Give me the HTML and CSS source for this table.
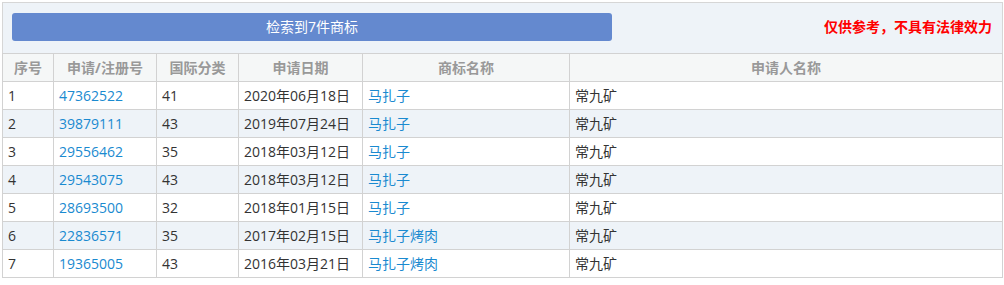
FILE: index.html
```html
<!DOCTYPE html>
<html lang="zh-CN">
<head>
<meta charset="utf-8">
<link rel="stylesheet" href="styles.css">
</head>
<body>
<div class="wrap">
  <div class="panel">
    <div class="btn">检索到7件商标</div>
    <div class="note">仅供参考，不具有法律效力</div>
  </div>
  <table class="grid">
    <colgroup>
      <col class="c1"><col class="c2"><col class="c3"><col class="c4"><col class="c5"><col class="c6">
    </colgroup>
    <thead>
      <tr><th>序号</th><th>申请/注册号</th><th>国际分类</th><th>申请日期</th><th>商标名称</th><th>申请人名称</th></tr>
    </thead>
    <tbody>
      <tr><td>1</td><td><a class="lnk">47362522</a></td><td>41</td><td>2020年06月18日</td><td><a class="lnk">马扎子</a></td><td>常九矿</td></tr>
      <tr><td>2</td><td><a class="lnk">39879111</a></td><td>43</td><td>2019年07月24日</td><td><a class="lnk">马扎子</a></td><td>常九矿</td></tr>
      <tr><td>3</td><td><a class="lnk">29556462</a></td><td>35</td><td>2018年03月12日</td><td><a class="lnk">马扎子</a></td><td>常九矿</td></tr>
      <tr><td>4</td><td><a class="lnk">29543075</a></td><td>43</td><td>2018年03月12日</td><td><a class="lnk">马扎子</a></td><td>常九矿</td></tr>
      <tr><td>5</td><td><a class="lnk">28693500</a></td><td>32</td><td>2018年01月15日</td><td><a class="lnk">马扎子</a></td><td>常九矿</td></tr>
      <tr><td>6</td><td><a class="lnk">22836571</a></td><td>35</td><td>2017年02月15日</td><td><a class="lnk">马扎子烤肉</a></td><td>常九矿</td></tr>
      <tr><td>7</td><td><a class="lnk">19365005</a></td><td>43</td><td>2016年03月21日</td><td><a class="lnk">马扎子烤肉</a></td><td>常九矿</td></tr>
    </tbody>
  </table>
</div>
</body>
</html>
```
FILE: styles.css
```css
html, body { margin: 0; padding: 0; background: #fff; }
body {
  font-family: "Open Sans", "Noto Sans CJK SC", sans-serif;
  font-size: 14px;
  color: #333;
}
.wrap {
  margin: 2px 0 0 2px;
  width: 1001px;
}
.panel {
  box-sizing: border-box;
  height: 51px;
  border: 1px solid #d6d6d6;
  border-bottom: none;
  background: #eef3f8;
  display: flex;
  align-items: flex-start;
  justify-content: space-between;
  padding: 10px 9px 0 9px;
}
.btn {
  width: 600px;
  height: 28px;
  line-height: 28px;
  background: #6489cf;
  color: #fff;
  text-align: center;
  border-radius: 3px;
}
.note {
  color: #f00;
  font-weight: bold;
  line-height: 28px;
  padding-right: 1px;
}
.grid {
  width: 1001px;
  border-collapse: collapse;
  table-layout: fixed;
}
.c1 { width: 51px; }
.c2 { width: 103px; }
.c3 { width: 82px; }
.c4 { width: 124px; }
.c5 { width: 207px; }
.c6 { width: 433px; }
.grid th, .grid td {
  border: 1px solid #d2d2d2;
  height: 27px;
  padding: 0 5px;
  line-height: 27px;
  white-space: nowrap;
  box-sizing: border-box;
}
.grid th {
  background: #f5f7f7;
  color: #999;
  font-weight: bold;
  text-align: center;
}
.grid td { text-align: left; }
.grid tbody tr:nth-child(even) td { background: #eef3f8; }
.lnk { color: #1a8ad0; text-decoration: none; }
```
